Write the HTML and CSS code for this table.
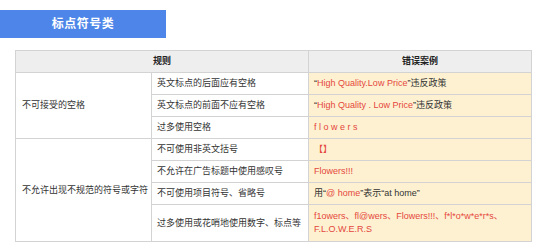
FILE: index.html
```html
<!DOCTYPE html>
<html lang="zh">
<head>
<meta charset="utf-8">
<link rel="stylesheet" href="styles.css">
</head>
<body>
<div class="title">标点符号类</div>
<table class="rules">
  <colgroup>
    <col class="c1"><col class="c2"><col class="c3">
  </colgroup>
  <thead>
    <tr><th colspan="2">规则</th><th>错误案例</th></tr>
  </thead>
  <tbody>
    <tr>
      <td rowspan="3" class="cat">不可接受的空格</td>
      <td>英文标点的后面应有空格</td>
      <td class="ex">“<span class="red">High Quality.Low Price</span>”违反政策</td>
    </tr>
    <tr>
      <td>英文标点的前面不应有空格</td>
      <td class="ex">“<span class="red">High Quality . Low Price</span>”违反政策</td>
    </tr>
    <tr>
      <td>过多使用空格</td>
      <td class="ex"><span class="red">f l o w e r s</span></td>
    </tr>
    <tr>
      <td rowspan="4" class="cat">不允许出现不规范的符号或字符</td>
      <td>不可使用非英文括号</td>
      <td class="ex"><span class="red">【】</span></td>
    </tr>
    <tr>
      <td>不允许在广告标题中使用感叹号</td>
      <td class="ex"><span class="red">Flowers!!!</span></td>
    </tr>
    <tr>
      <td>不可使用项目符号、省略号</td>
      <td class="ex">用“<span class="red">@ home</span>”表示“at home”</td>
    </tr>
    <tr class="tall">
      <td>过多使用或花哨地使用数字、标点等</td>
      <td class="ex"><span class="red">f1owers、fl@wers、Flowers!!!、f*l*o*w*e*r*s、<br>F.L.O.W.E.R.S</span></td>
    </tr>
  </tbody>
</table>
</body>
</html>
```
FILE: styles.css
```css
html, body {
  margin: 0;
  padding: 0;
  background: #ffffff;
}
body {
  font-family: "Liberation Sans", "Noto Sans CJK SC", sans-serif;
  color: #333333;
}
.title {
  margin-top: 10px;
  width: 166px;
  height: 28px;
  line-height: 28px;
  background: #4d86e8;
  color: #ffffff;
  font-size: 12px;
  font-weight: bold;
  text-align: center;
  letter-spacing: 0.5px;
}
.rules {
  margin: 12px 0 0 15px;
  border-collapse: collapse;
  table-layout: fixed;
  width: 516px;
  font-size: 9px;
  line-height: 13px;
  border: 1px solid #c9c9c9;
}
.c1 { width: 136px; }
.c2 { width: 157px; }
.c3 { width: 223px; }
.rules th,
.rules td {
  border: 1px solid #d3d3d3;
  padding: 4px 5px;
  text-align: left;
  vertical-align: middle;
  white-space: nowrap;
}
.rules th {
  background: #eeeeee;
  text-align: center;
  font-weight: bold;
  color: #222222;
}
.rules td.ex {
  background: #fdf1d1;
}
.rules td.cat {
  padding-left: 6px;
}
.rules tr.tall td {
  padding-top: 5px;
  padding-bottom: 5px;
}
.red {
  color: #e5473d;
}
```
